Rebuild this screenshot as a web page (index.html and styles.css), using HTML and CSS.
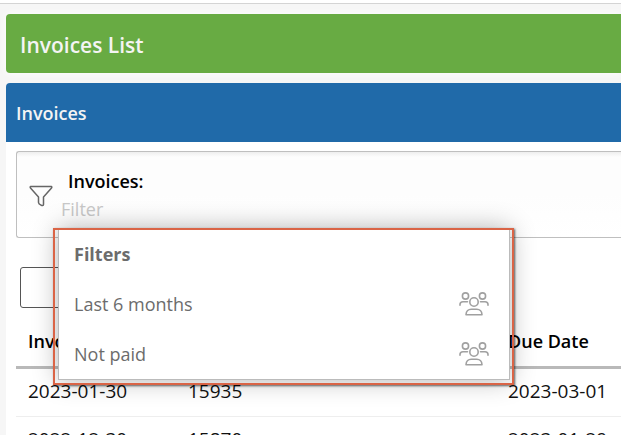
FILE: index.html
```html
<!DOCTYPE html>
<html lang="en">
<head>
    <meta charset="UTF-8">
    <meta name="viewport" content="width=device-width, initial-scale=1.0">
    <title>Invoices List</title>
    <link rel="stylesheet" href="styles.css">
</head>
<body>

    <!-- Shared icons -->
    <svg class="icon-defs" aria-hidden="true">
        <symbol id="icon-people" viewBox="0 0 30 24">
            <g fill="none" stroke="currentColor" stroke-width="1.6" stroke-linecap="round" stroke-linejoin="round">
                <circle cx="6.5" cy="4" r="3.1"/>
                <circle cx="23.5" cy="4" r="3.1"/>
                <circle cx="15" cy="10" r="4.2"/>
                <path d="M1 13.2v-.6C1 10.8 2.2 9.8 4 9.8h4.5"/>
                <path d="M29 13.2v-.6c0-1.8-1.2-2.8-3-2.8h-4.5"/>
                <path d="M7 22.8c0-3.600 2.600-5.600 5.200-5.600h5.600c2.600 0 5.200 2 5.200 5.600z"/>
            </g>
        </symbol>
    </svg>

    <header class="title-bar">
        <h1>Invoices List</h1>
    </header>

    <main class="panel">
        <h2 class="panel-header">Invoices</h2>

        <div class="panel-body">
            <div class="filter-box">
                <svg class="funnel" viewBox="0 0 24 22" aria-hidden="true">
                    <path d="M1.500 1.500h21c.6.6.4 1-.2 1.700L14.500 12v7.500c0 1.500-1.500 1.200-2.500.6-1.500-.8-2.500-1.400-2.500-2.600V12L1.700 3.200c-.6-.7-.8-1.100-.2-1.700z" fill="none" stroke="currentColor" stroke-width="1.500" stroke-linejoin="round"/>
                </svg>
                <div class="filter-field">
                    <label for="filter">Invoices:</label>
                    <input type="text" id="filter" placeholder="Filter">
                </div>

                <div class="highlight">
                    <div class="popup">
                        <h3>Filters</h3>
                        <button type="button" class="popup-item">
                            <span>Last 6 months</span>
                            <svg class="people"><use href="#icon-people"/></svg>
                        </button>
                        <button type="button" class="popup-item">
                            <span>Not paid</span>
                            <svg class="people"><use href="#icon-people"/></svg>
                        </button>
                    </div>
                </div>
            </div>

            <div class="toolbar">
                <button type="button" class="tool-button" aria-label="Action"></button>
            </div>

            <table class="invoices">
                <thead>
                    <tr>
                        <th>Invoice Date</th>
                        <th></th>
                        <th></th>
                        <th>Due Date</th>
                    </tr>
                </thead>
                <tbody>
                    <tr>
                        <td>2023-01-30</td>
                        <td>15935</td>
                        <td></td>
                        <td>2023-03-01</td>
                    </tr>
                    <tr>
                        <td>2022-12-30</td>
                        <td>15870</td>
                        <td></td>
                        <td>2023-01-29</td>
                    </tr>
                </tbody>
            </table>
        </div>
    </main>

</body>
</html>
```
FILE: styles.css
```css
* {
    box-sizing: border-box;
}

html {
    overflow: hidden;
    background-color: #f6f6f6;
}

body {
    margin: 0;
    padding: 10px 0 0 6px;
    margin-top: 3px;
    border-top: 1px solid #d4d4d4;
    font-family: 'Open Sans', 'Noto Sans', sans-serif;
    font-size: 18px;
    color: #111;
}

html::before {
    content: "";
    display: block;
    height: 3px;
    margin-bottom: -3px;
    background-color: #fff;
}

h1,
h2,
h3 {
    margin: 0;
    font-weight: 600;
}

.icon-defs {
    position: absolute;
    width: 0;
    height: 0;
}

.title-bar {
    height: 59px;
    padding: 0 14px;
    display: flex;
    align-items: center;
    background-color: #68ab43;
    border-radius: 4px 0 0 4px;
    box-shadow: 0 0 8px #fff;
}

.title-bar h1 {
    font-size: 21px;
    line-height: 28px;
    padding-top: 2px;
    color: #f4f4f4;
}

.panel {
    margin-top: 10px;
    background-color: #fff;
    border-radius: 4px 0 0 0;
}

.panel-header {
    height: 59px;
    padding: 0 10px;
    display: flex;
    align-items: center;
    background-color: #206aa9;
    border-radius: 4px 0 0 0;
    font-size: 18px;
    color: #f4f4f4;
}

.panel-body {
    padding: 9px 0 0 10px;
}

.filter-box {
    position: relative;
    height: 87px;
    display: flex;
    align-items: center;
    border: 1px solid #bfbfbf;
    border-right: none;
    border-radius: 3px 0 0 3px;
    background-color: #fdfdfd;
    background-image: linear-gradient(#eee, #fdfdfd 5px, #fdfdfd 50%, #fff);
}

.funnel {
    width: 24px;
    height: 22px;
    margin: 3px 0 0 12px;
    color: #666;
}

.filter-field {
    flex: 1;
    display: flex;
    flex-direction: column;
    padding-left: 8px;
}

.filter-field label {
    padding-left: 7px;
    line-height: 28px;
    font-weight: 600;
    color: #000;
}

.filter-field input {
    width: 100%;
    height: 28px;
    padding: 0;
    border: none;
    outline: none;
    background: none;
    font: inherit;
}

.filter-field input::placeholder {
    color: #c8c8c8;
    opacity: 1;
}

/* Filter popup with the marker frame round it */
.highlight {
    position: absolute;
    top: 76px;
    left: 36px;
    z-index: 2;
    width: 461px;
    padding: 0 4px 5px 5px;
}

.highlight::after {
    content: "";
    position: absolute;
    inset: 0;
    border: 2px solid #da6446;
    box-shadow: 1px 1px 2px rgba(0, 0, 0, 0.6);
    pointer-events: none;
}

.popup {
    padding: 2px 0 1px;
    border: 1px solid #bbb;
    border-top: none;
    background-color: #fff;
    box-shadow: 0 0 24px rgba(0, 0, 0, 0.3);
    color: #6c6c6c;
}

.popup h3 {
    padding: 0 15px;
    font-size: 18px;
    font-weight: 700;
    line-height: 48px;
}

.popup-item {
    width: 100%;
    height: 50px;
    padding: 1px 20px 0 15px;
    display: flex;
    align-items: center;
    justify-content: space-between;
    border: none;
    background: none;
    font: inherit;
    color: inherit;
    cursor: pointer;
}

.people {
    width: 30px;
    height: 24px;
    color: #a0a0a0;
}

.toolbar {
    padding: 29px 4px 0;
}

.tool-button {
    display: block;
    width: 120px;
    height: 41px;
    border: 1px solid #555;
    border-radius: 3px;
    background-color: #fff;
}

.invoices {
    width: 100%;
    margin-top: 8px;
    border-collapse: separate;
    border-spacing: 0;
    table-layout: fixed;
}

.invoices th,
.invoices td {
    width: 160px;
    padding: 0 12px;
    text-align: left;
    white-space: nowrap;
}

.invoices th:last-child,
.invoices td:last-child {
    width: auto;
}

.invoices th {
    height: 53px;
    border-bottom: 3px solid #b9b9b9;
    font-weight: 600;
    color: #000;
}

.invoices td {
    height: 48px;
    padding-bottom: 3px;
    border-bottom: 1px solid #eee;
    font-size: 19px;
}
```
